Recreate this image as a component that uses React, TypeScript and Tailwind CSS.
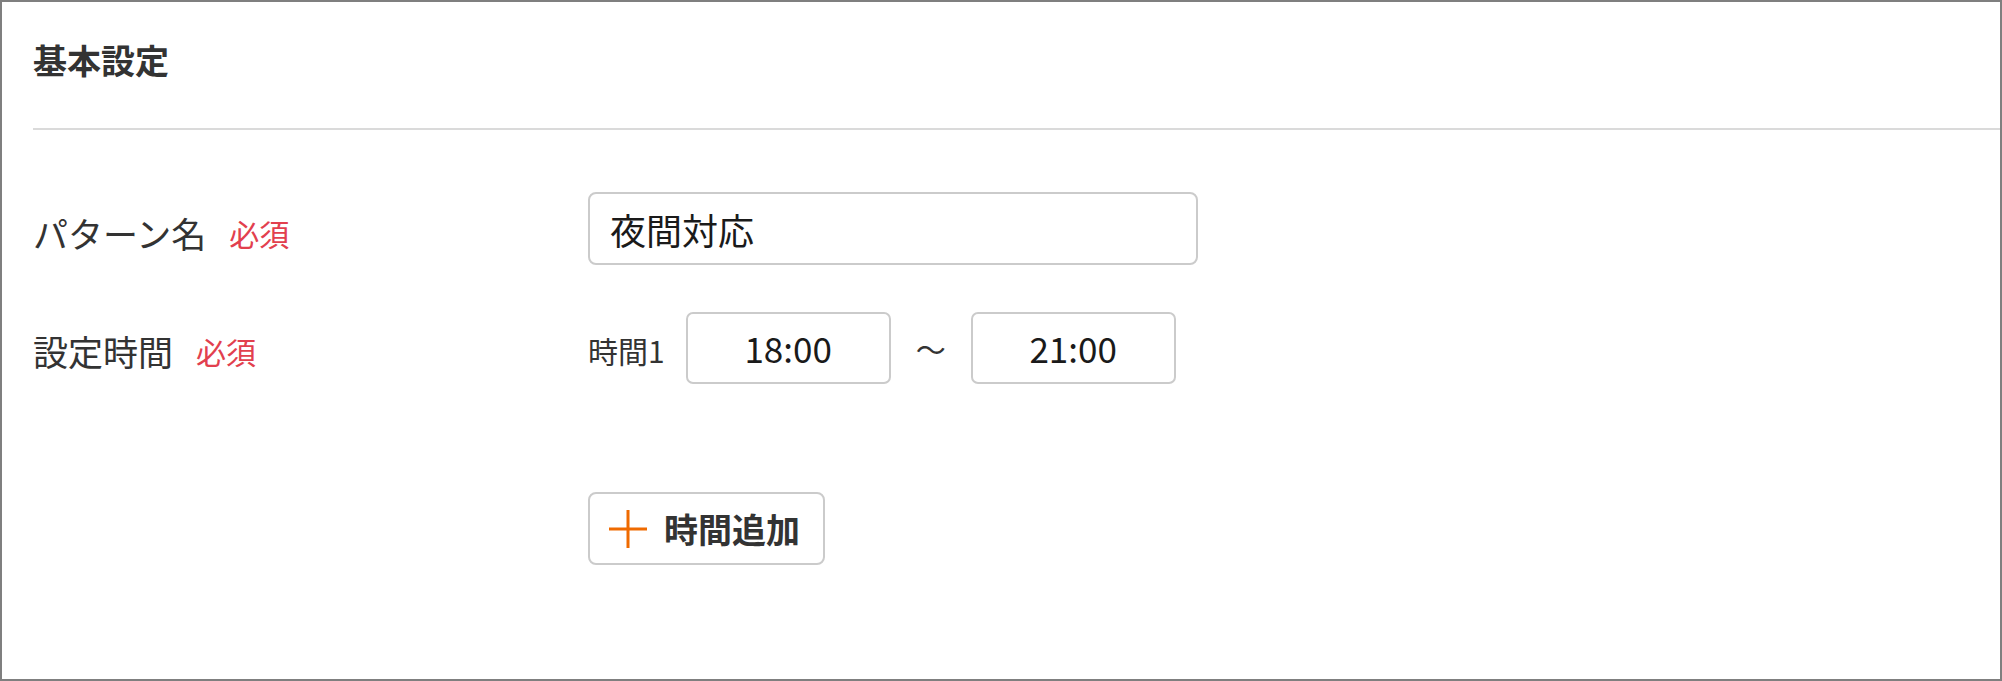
import React from 'react';

const Required = () => (
    <span className="ml-[23px] text-[30px] leading-[40px] text-[#e2404e]">必須</span>
);

const TimeBox = ({ value }: { value: string }) => (
    <div className="w-[205px] h-[72px] border-2 border-[#cbcbcb] rounded-[7px] flex items-center justify-center text-[35px] text-[#1a1a1a]">
        {value}
    </div>
);

const App = () => {
    return (
        <div className="w-[2002px] h-[681px] border-2 border-[#7f7f7f] bg-white overflow-hidden font-['Noto_Sans_CJK_JP',sans-serif] text-[#333]">
            <div className="pl-[31px]">
                <div className="h-[126px] pt-[38px]">
                    <h2 className="text-[34px] leading-[40px] font-bold">基本設定</h2>
                </div>
                <div className="h-[2px] bg-[#dadada]" />

                <div className="flex items-center mt-[62px]">
                    <div className="w-[555px] flex items-center pt-[9px]">
                        <span className="text-[35px] leading-[40px]">パターン名</span>
                        <Required />
                    </div>
                    <div className="w-[610px] h-[73px] border-2 border-[#cbcbcb] rounded-[8px] flex items-center pl-[20px] text-[36px] text-[#1a1a1a]">
                        夜間対応
                    </div>
                </div>

                <div className="flex items-center mt-[47px]">
                    <div className="w-[555px] flex items-center pt-[6px]">
                        <span className="text-[35px] leading-[40px]">設定時間</span>
                        <Required />
                    </div>
                    <span className="text-[30px] leading-[36px] pt-[4px]">時間1</span>
                    <div className="ml-[21px]">
                        <TimeBox value="18:00" />
                    </div>
                    <div className="w-[80px] flex justify-center text-[30px] text-[#333]">～</div>
                    <TimeBox value="21:00" />
                </div>

                <div className="flex mt-[108px]">
                    <div className="w-[555px]" />
                    <button className="w-[237px] h-[73px] border-2 border-[#cbcbcb] rounded-[8px] flex items-center pl-[19px] bg-white">
                        <svg width="38" height="38" viewBox="0 0 38 38" fill="none">
                            <path d="M19 0V38M0 19H38" stroke="#ef6a00" strokeWidth="3" />
                        </svg>
                        <span className="ml-[17px] text-[34px] leading-[40px] font-bold text-[#333]">時間追加</span>
                    </button>
                </div>
            </div>
        </div>
    );
};

export default App;
